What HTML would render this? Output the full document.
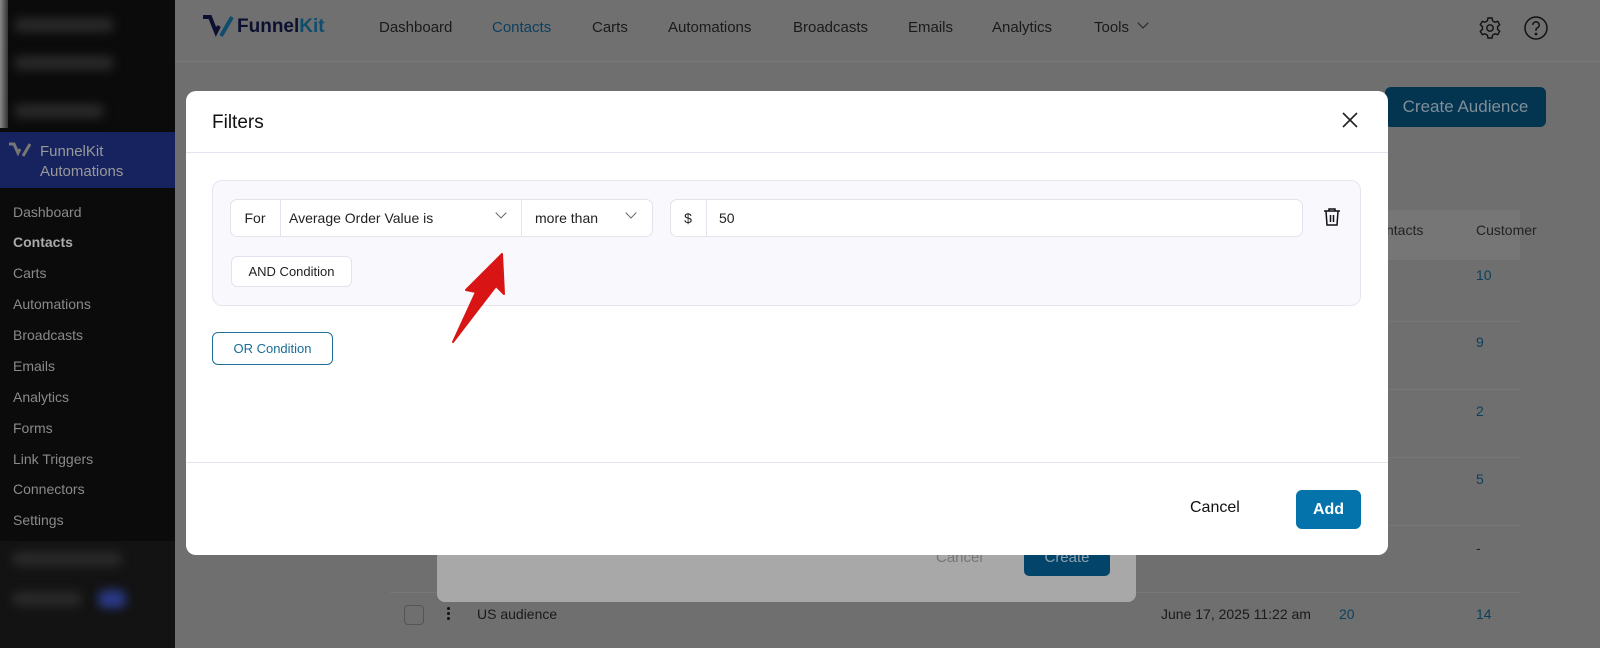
<!DOCTYPE html>
<html><head><meta charset="utf-8"><style>
*{box-sizing:border-box;margin:0;padding:0}
body{width:1600px;height:648px;overflow:hidden;background:#6f6f6f;font-family:"Liberation Sans",sans-serif;position:relative;font-size:14px}
.abs{position:absolute}
.sb{left:0;top:0;width:175px;height:648px;background:#0b0b0b}
.sb .it{position:absolute;left:13px;color:#8a8a8a;font-size:14px}
.blur{position:absolute;background:#2a2a2a;border-radius:8px;filter:blur(5px)}
.top{left:175px;top:0;width:1425px;height:62px;background:#707070;border-bottom:1px solid #787878}
.nav{position:absolute;top:19px;font-size:15px;color:#1a1a1a}
.modal{left:186px;top:91px;width:1202px;height:464px;background:#fff;border-radius:10px}
.sel{position:absolute;top:199px;height:38px;border:1px solid #e3e3ee;background:#fff;font-size:14px;color:#222}
.chev{position:absolute;top:12px;width:8px;height:8px;border-right:1.3px solid #666;border-bottom:1.3px solid #666;transform:rotate(45deg)}
</style></head><body>
<div class="abs sb">
 <div class="abs" style="left:0;top:0;width:8px;height:128px;background:linear-gradient(90deg,#888,#333)"></div>
 <div class="blur" style="left:14px;top:18px;width:100px;height:14px"></div>
 <div class="blur" style="left:14px;top:56px;width:100px;height:14px"></div>
 <div class="blur" style="left:14px;top:104px;width:90px;height:14px"></div>
 <div class="abs" style="left:0;top:132px;width:175px;height:56px;background:#16235e"></div>
 <svg class="abs" style="left:8px;top:142px" width="24" height="16" viewBox="0 0 24 16"><path d="M1 2h5l4 9 2-4" stroke="#777" stroke-width="3" fill="none"/><path d="M15 14L22 2" stroke="#777" stroke-width="3"/></svg>
 <div class="it" style="left:40px;top:142px;color:#999;font-size:15px;line-height:20px">FunnelKit<br>Automations</div>
 <div class="it" style="top:204px">Dashboard</div>
 <div class="it" style="top:234px;color:#aaa;font-weight:bold">Contacts</div>
 <div class="it" style="top:265px">Carts</div>
 <div class="it" style="top:296px">Automations</div>
 <div class="it" style="top:327px">Broadcasts</div>
 <div class="it" style="top:358px">Emails</div>
 <div class="it" style="top:389px">Analytics</div>
 <div class="it" style="top:420px">Forms</div>
 <div class="it" style="top:451px">Link Triggers</div>
 <div class="it" style="top:481px">Connectors</div>
 <div class="it" style="top:512px">Settings</div>
 <div class="abs" style="left:0;top:541px;width:175px;height:107px;background:#131313"></div>
 <div class="blur" style="left:12px;top:552px;width:110px;height:14px"></div>
 <div class="blur" style="left:12px;top:592px;width:70px;height:14px"></div>
 <div class="blur" style="left:98px;top:590px;width:28px;height:18px;background:#2a3a88"></div>
</div>
<div class="abs top">
 <svg class="abs" style="left:27px;top:14px" width="32" height="24" viewBox="0 0 32 24"><path d="M1 3h7l6 15 3-6" stroke="#0b1030" stroke-width="4" fill="none"/><path d="M19 22L30 3" stroke="#0f4d70" stroke-width="4"/></svg>
 <div class="abs" style="left:62px;top:16px;font-size:19px;font-weight:bold;color:#0b1030">Funnel<span style="color:#0f4d70">Kit</span></div>
 <div class="nav" style="left:204px">Dashboard</div>
 <div class="nav" style="left:317px;color:#0b3f5e">Contacts</div>
 <div class="nav" style="left:417px">Carts</div>
 <div class="nav" style="left:493px">Automations</div>
 <div class="nav" style="left:618px">Broadcasts</div>
 <div class="nav" style="left:733px">Emails</div>
 <div class="nav" style="left:817px">Analytics</div>
 <div class="nav" style="left:919px">Tools</div>
 <div class="abs" style="left:964px;top:19px;width:8px;height:8px;border-right:1.3px solid #222;border-bottom:1.3px solid #222;transform:rotate(45deg)"></div>
 <svg class="abs" style="left:1303px;top:16px" width="24" height="24" viewBox="0 0 24 24" fill="none" stroke="#111" stroke-width="1.4"><circle cx="12" cy="12" r="3.2"/><path d="M10 2h4l.6 2.8 2.4 1.4 2.7-.9 2 3.4-2.1 1.9v2.8l2.1 1.9-2 3.4-2.7-.9-2.4 1.4L14 22h-4l-.6-2.8-2.4-1.4-2.7.9-2-3.4 2.1-1.9v-2.8L2.3 8.7l2-3.4 2.7.9L9.4 4.8z"/></svg>
 <svg class="abs" style="left:1348px;top:15px" width="26" height="26" viewBox="0 0 26 26" fill="none" stroke="#111" stroke-width="1.5"><circle cx="13" cy="13" r="11"/><path d="M9.8 10a3.2 3.2 0 1 1 4.4 3c-.9.4-1.2 1-1.2 2v.8"/><circle cx="13" cy="19" r=".6" fill="#111"/></svg>
</div>
<div class="abs" style="left:1385px;top:87px;width:161px;height:40px;background:#033450;border-radius:6px;color:#7f8e98;font-size:17px;text-align:center;line-height:40px">Create Audience</div>
<div class="abs" style="left:1386px;top:210px;width:134px;height:50px;background:#767676"></div>
<div class="abs" style="left:1386px;top:222px;color:#222;font-size:14px">ntacts</div>
<div class="abs" style="left:1476px;top:222px;color:#222;font-size:14px">Customer</div>
<div class="abs" style="left:1476px;top:267px;color:#0b3f5e">10</div>
<div class="abs" style="left:1476px;top:334px;color:#0b3f5e">9</div>
<div class="abs" style="left:1476px;top:403px;color:#0b3f5e">2</div>
<div class="abs" style="left:1476px;top:471px;color:#0b3f5e">5</div>
<div class="abs" style="left:1476px;top:540px;color:#222">-</div>
<div class="abs" style="left:1386px;top:321px;width:134px;height:1px;background:#777"></div>
<div class="abs" style="left:1386px;top:389px;width:134px;height:1px;background:#777"></div>
<div class="abs" style="left:1386px;top:457px;width:134px;height:1px;background:#777"></div>
<div class="abs" style="left:1386px;top:525px;width:134px;height:1px;background:#777"></div>
<div class="abs" style="left:390px;top:592px;width:1130px;height:1px;background:#777"></div>
<div class="abs" style="left:437px;top:540px;width:699px;height:62px;background:#a8a8a8;border-radius:8px"></div>
<div class="abs" style="left:936px;top:549px;color:#777;font-size:15px">Cancel</div>
<div class="abs" style="left:1024px;top:540px;width:86px;height:36px;background:#03446a;border-radius:0 0 5px 5px;color:#8fa2ae;text-align:center;line-height:36px;font-size:15px">Create</div>
<div class="abs" style="left:404px;top:605px;width:20px;height:20px;border:1.5px solid #555;border-radius:4px"></div>
<div class="abs" style="left:447px;top:607px;width:3px;height:3px;background:#111;border-radius:50%;box-shadow:0 5px 0 #111,0 10px 0 #111"></div>
<div class="abs" style="left:477px;top:606px;color:#1a1a1a">US audience</div>
<div class="abs" style="left:1161px;top:606px;color:#1a1a1a">June 17, 2025 11:22 am</div>
<div class="abs" style="left:1339px;top:606px;color:#0b3f5e">20</div>
<div class="abs" style="left:1476px;top:606px;color:#0b3f5e">14</div>

<div class="abs modal">
 <div class="abs" style="left:26px;top:21px;font-size:19px;color:#111">Filters</div>
 <svg class="abs" style="left:1155px;top:20px" width="18" height="18" viewBox="0 0 18 18" stroke="#222" stroke-width="1.6"><path d="M2 2l14 14M16 2L2 16"/></svg>
 <div class="abs" style="left:0;top:61px;width:1202px;height:1px;background:#e4e4ee"></div>
 <div class="abs" style="left:26px;top:89px;width:1149px;height:126px;background:#f8f8fd;border:1px solid #e5e5f0;border-radius:10px"></div>
 <div class="abs" style="left:0;top:371px;width:1202px;height:1px;background:#e4e4ee"></div>
 <div class="abs" style="left:26px;top:241px;width:121px;height:33px;border:1px solid #1f6f9a;border-radius:6px;color:#1a6d96;font-size:13px;text-align:center;line-height:31px">OR Condition</div>
 <div class="abs" style="left:1004px;top:408px;font-size:16px;color:#111">Cancel</div>
 <div class="abs" style="left:1110px;top:399px;width:65px;height:39px;background:#0473ab;border-radius:6px;color:#fff;font-weight:bold;font-size:16px;text-align:center;line-height:39px">Add</div>
</div>
<div class="sel" style="left:230px;width:423px;border-radius:7px"></div>
<div class="abs" style="left:230px;top:199px;width:51px;height:38px;border-right:1px solid #e3e3ee;text-align:center;line-height:38px;color:#222">For</div>
<div class="abs" style="left:289px;top:210px;color:#222">Average Order Value is</div>
<div class="chev" style="left:497px;top:209px"></div>
<div class="abs" style="left:521px;top:199px;width:1px;height:38px;background:#e3e3ee"></div>
<div class="abs" style="left:535px;top:210px;color:#222">more than</div>
<div class="chev" style="left:627px;top:209px"></div>
<div class="sel" style="left:670px;width:633px;border-radius:7px"></div>
<div class="abs" style="left:670px;top:199px;width:37px;height:38px;border-right:1px solid #e3e3ee;text-align:center;line-height:38px;color:#222">$</div>
<div class="abs" style="left:719px;top:210px;color:#222">50</div>
<svg class="abs" style="left:1323px;top:207px" width="18" height="20" viewBox="0 0 18 20" fill="none" stroke="#111" stroke-width="1.5"><path d="M1 4h16M6 4V2h6v2M3 4l1 14h10l1-14M7.5 8v7M10.5 8v7"/></svg>
<div class="abs" style="left:231px;top:256px;width:121px;height:31px;background:#fff;border:1px solid #e3e3ee;border-radius:6px;text-align:center;line-height:29px;font-size:13px;color:#222">AND Condition</div>
<svg class="abs" style="left:440px;top:250px" width="70" height="100" viewBox="0 0 70 100"><path d="M13 92L36 42 26 40 62 4 64 44 56 36z" fill="#d81414" stroke="#d81414" stroke-width="2" stroke-linejoin="round"/></svg>
</body></html>
